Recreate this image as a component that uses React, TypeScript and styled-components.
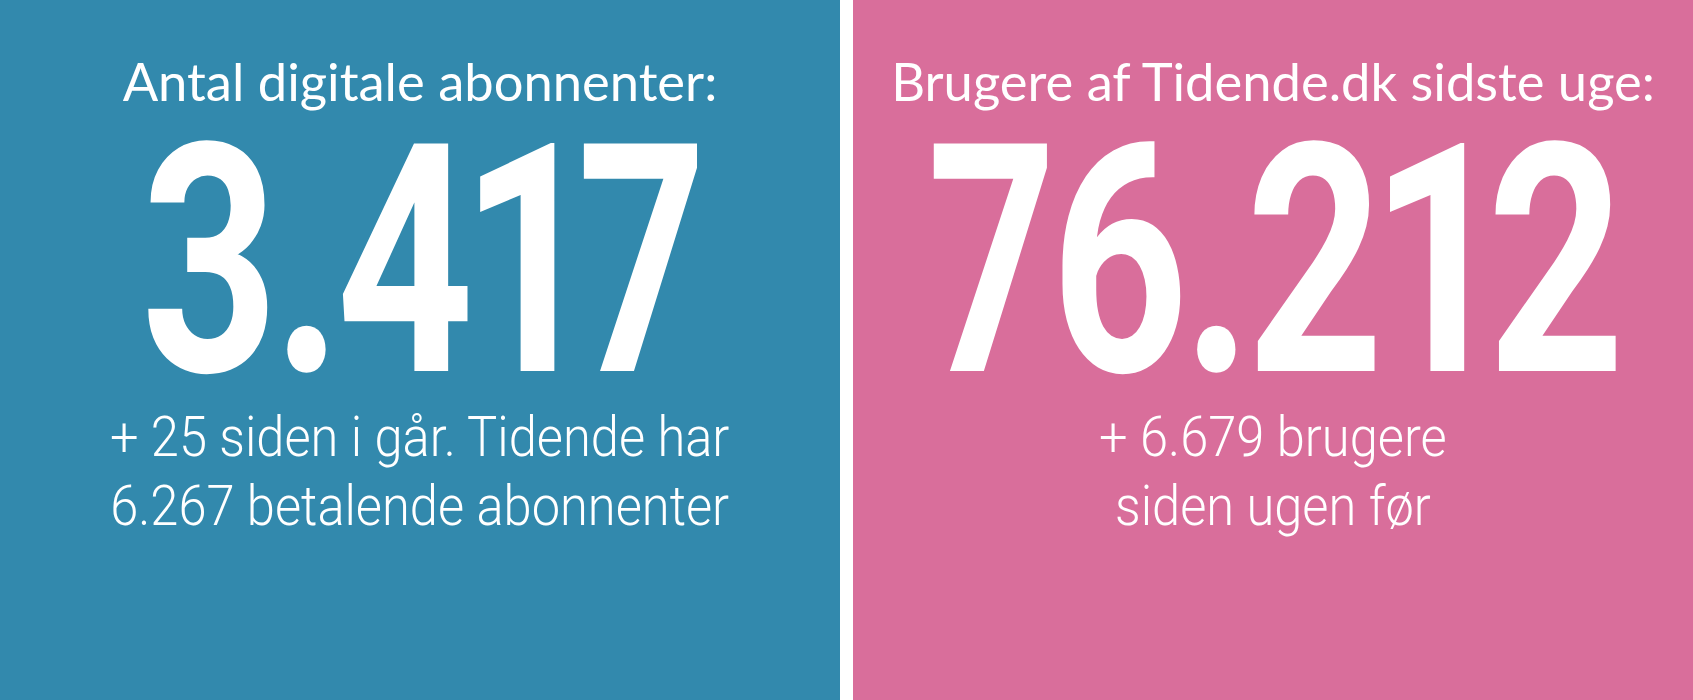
import React from 'react';
import styled, {createGlobalStyle} from 'styled-components';

const GlobalStyle = createGlobalStyle`
  html, body {
    margin: 0;
    padding: 0;
    background: #ffffff;
  }
`

const Board = styled.div`
  display: grid;
  grid-template-columns: 840px 840px;
  column-gap: 13px;
  width: 1693px;
  height: 700px;
  background: #ffffff;
`

const Panel = styled.section<{ $bg: string }>`
  display: flex;
  flex-direction: column;
  align-items: center;
  padding-top: 51px;
  background: ${p => p.$bg};
  color: #ffffff;
  overflow: hidden;
`

const Title = styled.h2`
  margin: 0;
  font-family: Lato, "Open Sans", sans-serif;
  font-weight: 400;
  font-size: 52.5px;
  line-height: 60px;
  white-space: nowrap;
`

const Figure = styled.div`
  margin-top: 31px;
  font-family: Roboto, "Liberation Sans", sans-serif;
  font-weight: 700;
  font-size: 320px;
  line-height: 240px;
  letter-spacing: -8px;
  font-variant-numeric: proportional-nums;
  white-space: nowrap;
  transform: scaleX(0.75);
`

const Note = styled.p`
  margin: 21px 0 0;
  font-family: Roboto, "Liberation Sans", sans-serif;
  font-weight: 300;
  font-size: 55px;
  line-height: 69px;
  text-align: center;
  white-space: nowrap;
  transform: scaleX(0.92);
`

interface IStatProps {
    bg: string
    title: string
    value: string
    lines: string[]
}

const Stat = ({bg, title, value, lines}: IStatProps) => (
    <Panel $bg={bg}>
        <Title>{title}</Title>
        <Figure>{value}</Figure>
        <Note>
            {lines.map((line, i) => (
                <React.Fragment key={i}>
                    {i > 0 && <br/>}
                    {line}
                </React.Fragment>
            ))}
        </Note>
    </Panel>
)

const App = () => {
    return (
        <>
            <GlobalStyle/>
            <Board>
                <Stat bg="#3289ad"
                      title="Antal digitale abonnenter:"
                      value="3.417"
                      lines={["+ 25 siden i går. Tidende har", "6.267 betalende abonnenter"]}/>
                <Stat bg="#d96e9b"
                      title="Brugere af Tidende.dk sidste uge:"
                      value="76.212"
                      lines={["+ 6.679 brugere", "siden ugen før"]}/>
            </Board>
        </>
    );
};

export default App;
